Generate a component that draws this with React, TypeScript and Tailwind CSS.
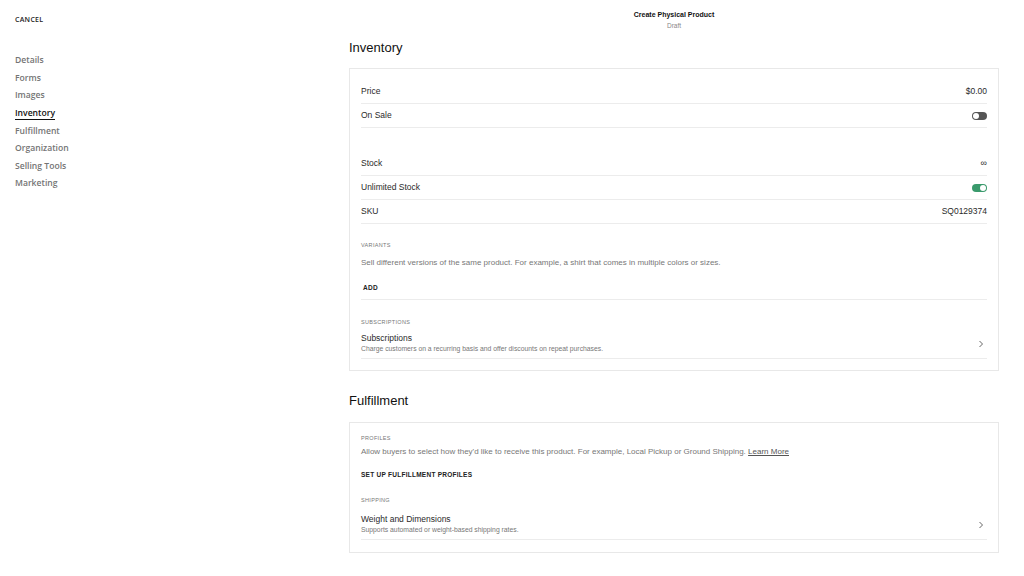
const navItems = ['Details', 'Forms', 'Images', 'Inventory', 'Fulfillment', 'Organization', 'Selling Tools', 'Marketing'];

function Toggle({ on }: { on: boolean }) {
  return (
    <div className={on ? 'w-[15px] h-[8px] rounded-full bg-[#3a9a6c] flex items-center justify-end px-[1px]' : 'w-[15px] h-[8px] rounded-full bg-[#555] flex items-center justify-start px-[1px]'}>
      <div className="w-[6px] h-[6px] rounded-full bg-white" />
    </div>
  );
}

function Row({ label, children }: { label: string; children?: React.ReactNode }) {
  return (
    <div className="h-[24px] flex items-center justify-between border-b border-[#ececec] text-[8.5px] text-[#2a2a2a]">
      <span>{label}</span>
      {children}
    </div>
  );
}

function Label({ children }: { children: React.ReactNode }) {
  return <div className="text-[5.5px] leading-[10px] tracking-[0.06em] text-[#777] uppercase">{children}</div>;
}

function Chevron() {
  return (
    <svg width="6" height="8" viewBox="0 0 6 8" fill="none">
      <path d="M1.5 1 L4.5 4 L1.5 7" stroke="#666" strokeWidth="1" />
    </svg>
  );
}

function LinkRow({ title, desc }: { title: string; desc: string }) {
  return (
    <div className="flex items-center justify-between border-b border-[#ececec] pt-[4px] pb-[4px]">
      <div>
        <div className="text-[8.5px] leading-[11px] text-[#2a2a2a]">{title}</div>
        <div className="text-[6.8px] leading-[10px] text-[#777]">{desc}</div>
      </div>
      <div className="pr-[3px]">
        <Chevron />
      </div>
    </div>
  );
}

export default function App() {
  return (
    <div className="w-[1024px] h-[576px] bg-white flex overflow-hidden" style={{ fontFamily: '"Liberation Sans", Arial, sans-serif' }}>
      {/* Sidebar */}
      <aside className="w-[349px] shrink-0 pl-[15px] pt-[16px]" style={{ fontFamily: '"Open Sans", sans-serif' }}>
        <div className="text-[7px] leading-[8px] font-semibold tracking-[0.04em] text-[#222]">CANCEL</div>
        <nav className="mt-[28px] flex flex-col">
          {navItems.map((item) => (
            <div key={item} className="h-[17.6px] flex items-center">
              <span
                className={
                  item === 'Inventory'
                    ? 'text-[8.6px] leading-[11px] font-semibold text-[#111] border-b border-[#111]'
                    : 'text-[8.6px] leading-[11px] font-semibold text-[#747474]'
                }
              >
                {item}
              </span>
            </div>
          ))}
        </nav>
      </aside>

      {/* Main */}
      <main className="w-[650px] shrink-0">
        <div className="pt-[10px] text-center">
          <div className="text-[7px] leading-[10px] font-bold text-[#111]">Create Physical Product</div>
          <div className="mt-[1px] text-[6.5px] leading-[10px] text-[#888]">Draft</div>
        </div>

        <h2 className="mt-[9px] text-[13px] leading-[16px] text-[#111]">Inventory</h2>
        <section className="mt-[12px] border border-[#e8e8e8] pt-[11px] pb-[11px] px-[11px]">
          <Row label="Price">
            <span>$0.00</span>
          </Row>
          <Row label="On Sale">
            <Toggle on={false} />
          </Row>
          <div className="h-[24px]" />
          <Row label="Stock">
            <span className="text-[9px]">∞</span>
          </Row>
          <Row label="Unlimited Stock">
            <Toggle on={true} />
          </Row>
          <Row label="SKU">
            <span>SQ0129374</span>
          </Row>

          <div className="mt-[16px]">
            <Label>Variants</Label>
          </div>
          <div className="mt-[7px] text-[8px] leading-[12px] text-[#777]">
            Sell different versions of the same product. For example, a shirt that comes in multiple colors or sizes.
          </div>
          <div className="mt-[7px] h-[24px] flex items-center border-b border-[#ececec] pl-[2px] text-[6.5px] font-bold tracking-[0.04em] text-[#222]">
            ADD
          </div>

          <div className="mt-[17px]">
            <Label>Subscriptions</Label>
          </div>
          <div className="mt-[2px]">
            <LinkRow title="Subscriptions" desc="Charge customers on a recurring basis and offer discounts on repeat purchases." />
          </div>
        </section>

        <h2 className="mt-[22px] text-[13px] leading-[16px] text-[#111]">Fulfillment</h2>
        <section className="mt-[13px] border border-[#e8e8e8] pt-[10px] pb-[12px] px-[11px]">
          <Label>Profiles</Label>
          <div className="mt-[3px] text-[8px] leading-[12px] text-[#777]">
            Allow buyers to select how they'd like to receive this product. For example, Local Pickup or Ground Shipping.{' '}
            <span className="underline text-[#555]">Learn More</span>
          </div>
          <div className="mt-[12px] text-[6.5px] leading-[10px] font-bold tracking-[0.04em] text-[#222]">SET UP FULFILLMENT PROFILES</div>
          <div className="mt-[15px]">
            <Label>Shipping</Label>
          </div>
          <div className="mt-[5px]">
            <LinkRow title="Weight and Dimensions" desc="Supports automated or weight-based shipping rates." />
          </div>
        </section>
      </main>
    </div>
  );
}
